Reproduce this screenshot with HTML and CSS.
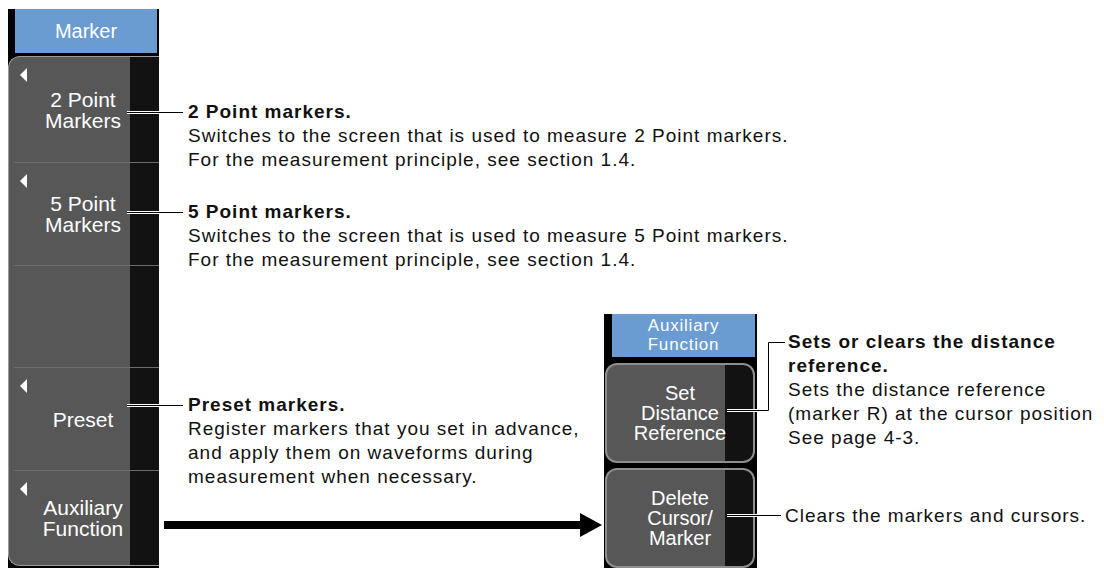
FILE: index.html
```html
<!DOCTYPE html>
<html lang="en">
<head>
    <meta charset="UTF-8">
    <meta name="viewport" content="width=device-width, initial-scale=1.0">
    <title>Marker menu</title>
    <link rel="stylesheet" href="styles.css">
</head>
<body>

    <div class="figure">
        <div class="menu">
            <div class="menu-title">Marker</div>
            <div class="menu-body">
                <div class="menu-btn btn-a"><span class="tri"></span><span class="label">2 Point<br>Markers</span></div>
                <div class="menu-btn btn-b"><span class="tri"></span><span class="label">5 Point<br>Markers</span></div>
                <div class="menu-btn btn-c"></div>
                <div class="menu-btn btn-d"><span class="tri"></span><span class="label">Preset</span></div>
                <div class="menu-btn btn-e"><span class="tri"></span><span class="label">Auxiliary<br>Function</span></div>
            </div>
        </div>

        <div class="content">
            <p class="note note-2pt"><b>2 Point markers.</b><br>Switches to the screen that is used to measure 2 Point markers.<br>For the measurement principle, see section 1.4.</p>
            <p class="note note-5pt"><b>5 Point markers.</b><br>Switches to the screen that is used to measure 5 Point markers.<br>For the measurement principle, see section 1.4.</p>

            <div class="lower">
                <p class="note note-preset"><b>Preset markers.</b><br>Register markers that you set in advance,<br>and apply them on waveforms during<br>measurement when necessary.</p>

                <div class="aux">
                    <div class="aux-menu">
                        <div class="aux-title">Auxiliary<br>Function</div>
                        <div class="aux-btn">Set<br>Distance<br>Reference</div>
                        <div class="aux-btn">Delete<br>Cursor/<br>Marker</div>
                    </div>
                    <div class="aux-notes">
                        <p class="note note-ref"><b>Sets or clears the distance<br>reference.</b><br>Sets the distance reference<br>(marker R) at the cursor position<br>See page 4-3.</p>
                        <p class="note note-clear">Clears the markers and cursors.</p>
                    </div>
                </div>
            </div>
        </div>

        <!-- leader lines and the arrow lie over the rest -->
        <svg class="leaders" width="1104" height="568" viewBox="0 0 1104 568">
            <g fill="none" stroke="#fff" stroke-width="3">
                <path d="M127 112.5H183"/>
                <path d="M127 212.5H183"/>
                <path d="M127 405.5H183"/>
                <path d="M727 410.5H768.5V342.5H785"/>
                <path d="M727 515.5H781"/>
            </g>
            <g fill="none" stroke="#000" stroke-width="1">
                <path d="M127 112.5H183"/>
                <path d="M127 212.5H183"/>
                <path d="M127 405.5H183"/>
                <path d="M727 410.5H768.5V342.5H785"/>
                <path d="M727 515.5H781"/>
            </g>
            <rect x="164" y="521" width="418" height="8" fill="#000"/>
            <polygon points="580,513 602,525 580,537" fill="#000"/>
        </svg>
    </div>

</body>
</html>
```

FILE: styles.css
```css
body {
    margin: 0;
    background-color: #fff;
    font-family: "Liberation Sans", Arial, sans-serif;
}
.figure {
    position: relative;
    display: flex;
    width: 1104px;
    height: 568px;
    overflow: hidden;
}

/* instrument menu on the left */
.menu {
    flex: none;
    display: flex;
    flex-direction: column;
    width: 151px;
    height: 559px;
    margin: 9px 0 0 8px;
    background-color: #000;
}
.menu-title {
    flex: none;
    height: 44px;
    margin: 0 2px 0 7px;
    background-color: #6a9bd1;
    color: #fff;
    font-size: 20px;
    line-height: 44px;
    text-align: center;
}
.menu-body {
    flex: none;
    display: flex;
    flex-direction: column;
    height: 510px;
    margin-top: 3px;
    box-sizing: border-box;
    border: 1px solid #9c9c9c;
    border-right: none;
    border-radius: 12px 0 0 12px;
    background: linear-gradient(to right, #575757 0 121px, #121212 121px);
}
.menu-btn {
    position: relative;
    display: flex;
    align-items: center;
    justify-content: center;
    box-sizing: border-box;
    margin-left: 5px;
    padding-right: 7px;
    border-top: 1px solid #6c6c6c;
    color: #fff;
    font-size: 21px;
    line-height: 21px;
    text-align: center;
}
.btn-a { height: 105px; border-top: none; }
.btn-b { height: 103px; }
.btn-c { height: 102px; }
.btn-d { height: 103px; }
.btn-e { flex: 1; }
.tri {
    position: absolute;
    top: 11px;
    left: 6px;
    width: 0;
    height: 0;
    border-top: 7px solid transparent;
    border-bottom: 7px solid transparent;
    border-right: 7px solid #fff;
}

/* explanations */
.content {
    flex: 1;
    display: flex;
    flex-direction: column;
    margin-left: 29px;
}
.note {
    margin: 0;
    color: #111;
    font-size: 19px;
    line-height: 24px;
    letter-spacing: 1px;
    white-space: nowrap;
}
.note-2pt { margin-top: 100px; }
.note-5pt { margin-top: 28px; }
.lower {
    display: flex;
    align-items: flex-start;
    margin-top: 42px;
}
.note-preset {
    flex: 0 0 416px;
    margin-top: 79px;
}

/* auxiliary function sub menu */
.aux {
    display: flex;
    align-items: flex-start;
}
.aux-menu {
    flex: none;
    display: flex;
    flex-direction: column;
    gap: 5px;
    width: 153px;
    height: 254px;
    overflow: hidden;
    background-color: #000;
}
.aux-title {
    flex: none;
    height: 43px;
    margin: 0 2px 1px 8px;
    padding-top: 2px;
    box-sizing: border-box;
    background-color: #6a9bd1;
    color: #fff;
    font-size: 17px;
    line-height: 19px;
    letter-spacing: 0.8px;
    text-align: center;
}
.aux-btn {
    flex: none;
    display: flex;
    align-items: center;
    justify-content: center;
    width: 150px;
    height: 100px;
    margin-left: 1px;
    box-sizing: border-box;
    border: 2px solid #8e8e8e;
    border-radius: 12px;
    background: linear-gradient(to right, #575757 0 118px, #121212 118px);
    color: #fff;
    font-size: 20px;
    line-height: 20px;
    text-align: center;
}
.aux-notes {
    display: flex;
    flex-direction: column;
    margin-left: 31px;
}
.note-ref { margin-top: 16px; }
.note-clear {
    margin-top: 54px;
    margin-left: -3px;
}

.leaders {
    position: absolute;
    top: 0;
    left: 0;
    pointer-events: none;
}
```
